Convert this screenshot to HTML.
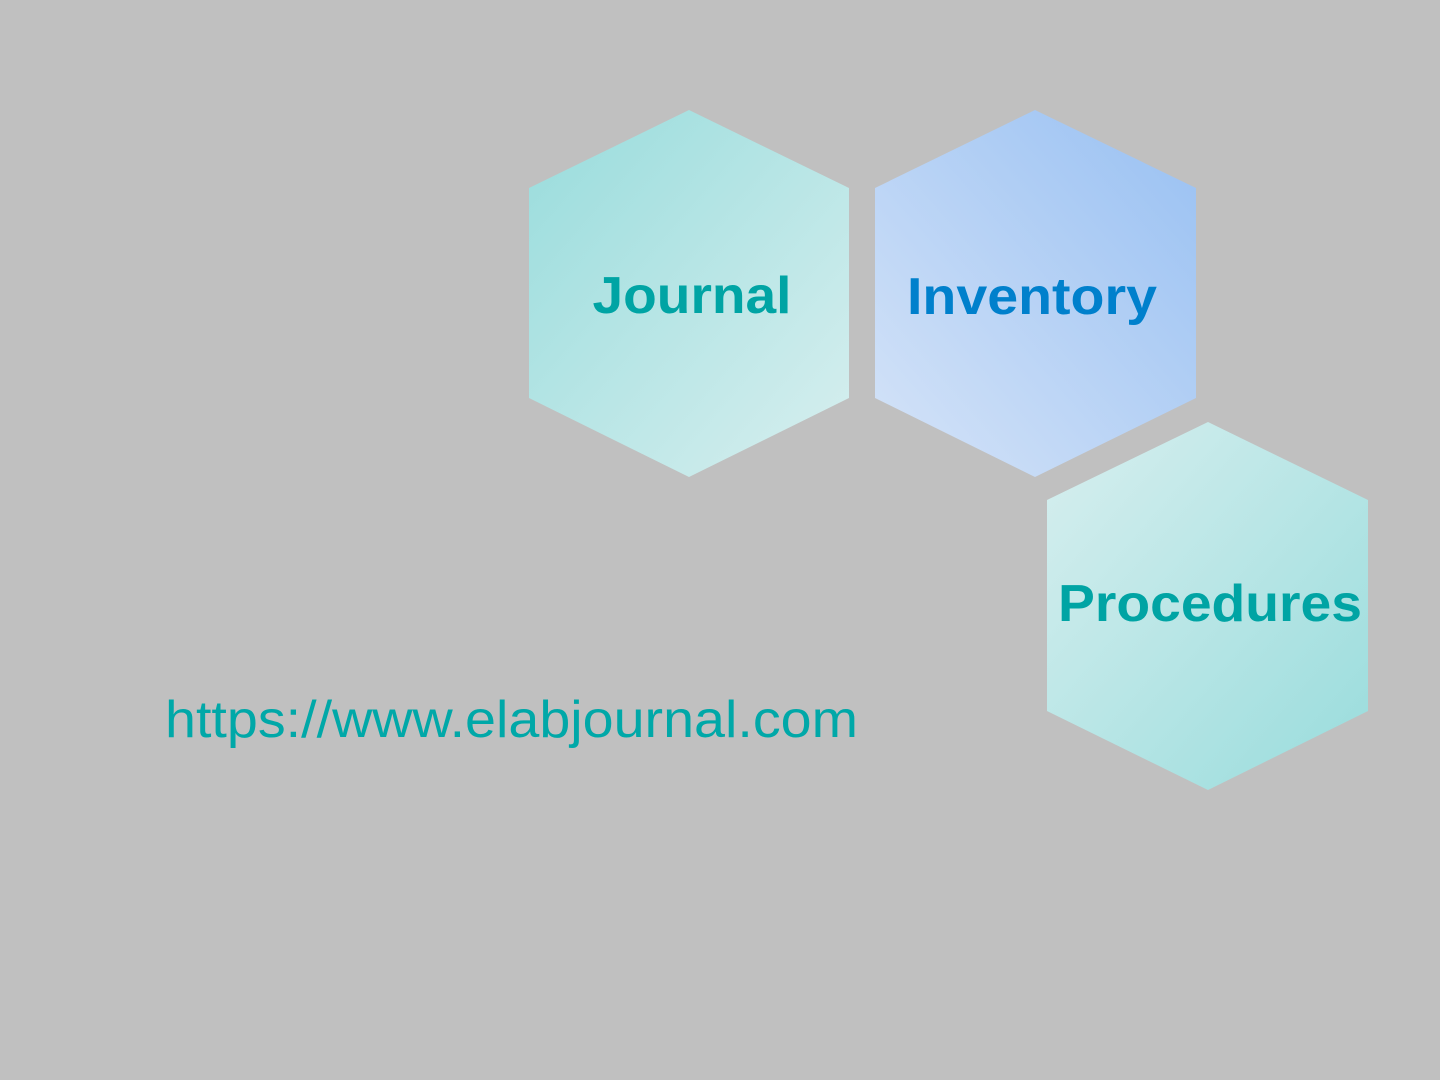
<!DOCTYPE html>
<html><head><meta charset="utf-8"><style>
html,body{margin:0;padding:0;background:#c0c0c0;width:1440px;height:1080px;overflow:hidden}
svg{display:block}
</style></head><body>
<svg width="1440" height="1080" viewBox="0 0 1440 1080" xmlns="http://www.w3.org/2000/svg">
<defs>
<linearGradient id="g1" x1="0" y1="0" x2="1" y2="1"><stop offset="0" stop-color="#98dcdc"/><stop offset="1" stop-color="#d8efef"/></linearGradient>
<linearGradient id="g2" x1="1" y1="0" x2="0" y2="1"><stop offset="0" stop-color="#98c0f2"/><stop offset="1" stop-color="#d6e4f8"/></linearGradient>
<linearGradient id="g3" x1="0" y1="0" x2="1" y2="1"><stop offset="0" stop-color="#d8efef"/><stop offset="1" stop-color="#98dcdc"/></linearGradient>
</defs>
<rect width="1440" height="1080" fill="#c0c0c0"/>
<polygon points="689,110 849,188 849,398 689,477 529,398 529,188" fill="url(#g1)"/>
<polygon points="1035,110 1196,188 1196,398 1035,477 875,398 875,188" fill="url(#g2)"/>
<polygon points="1208,422 1368,500 1368,711 1208,790 1047,711 1047,500" fill="url(#g3)"/>
<g font-family="Liberation Sans, sans-serif" font-weight="bold" font-size="52" text-anchor="middle">
<text x="692" y="313" fill="#00a4a4" textLength="199" lengthAdjust="spacingAndGlyphs">Journal</text>
<text x="1032" y="314" fill="#0080cc" textLength="250" lengthAdjust="spacingAndGlyphs">Inventory</text>
<text x="1210" y="621" fill="#00a4a4" textLength="304" lengthAdjust="spacingAndGlyphs">Procedures</text>
</g>
<text x="165" y="737" font-family="Liberation Sans, sans-serif" font-size="52" fill="#00a8a8" textLength="693" lengthAdjust="spacingAndGlyphs">https://www.elabjournal.com</text>
</svg>
</body></html>
